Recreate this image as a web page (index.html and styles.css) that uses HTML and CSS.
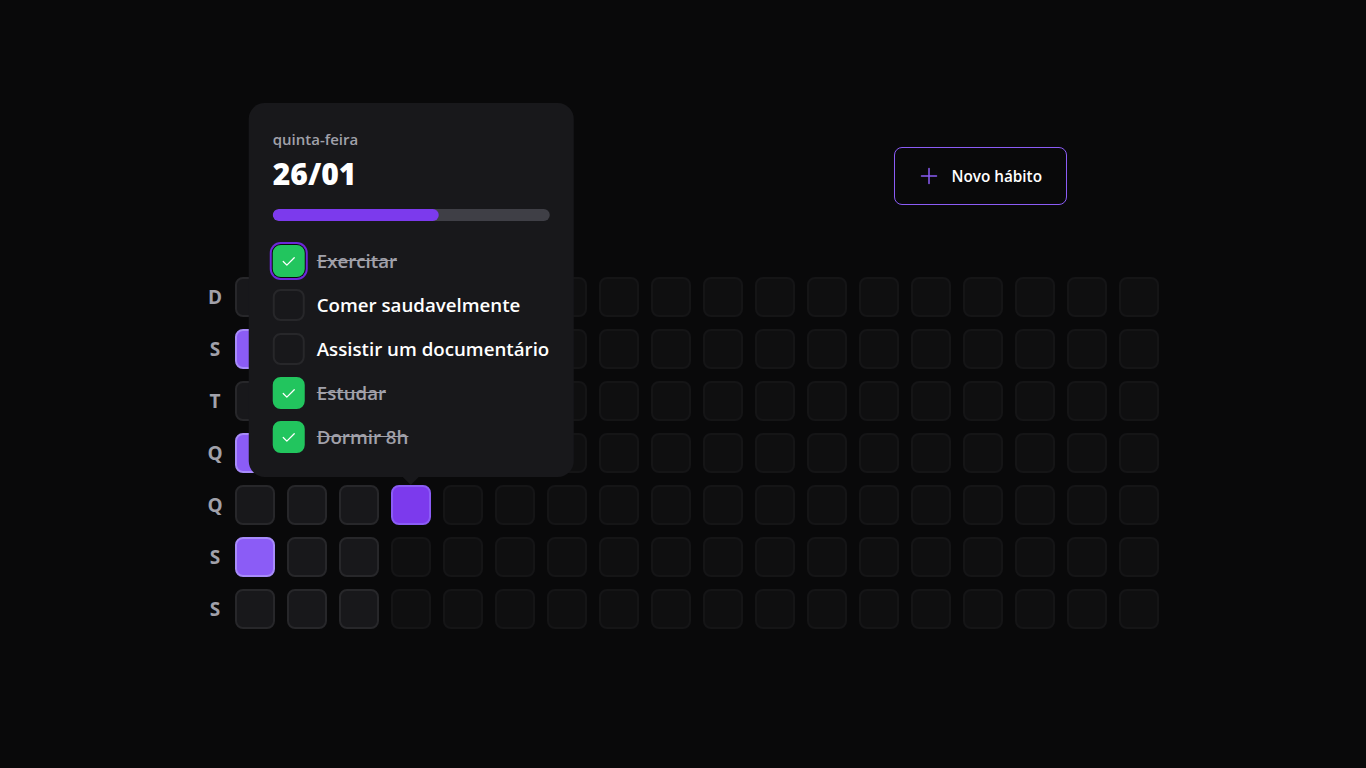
FILE: index.html
```html
<!DOCTYPE html>
<html lang="pt-BR">
<head>
<meta charset="utf-8">
<title>Habits</title>
<link rel="stylesheet" href="styles.css">
</head>
<body>
<div class="screen">
  <div class="content">
    <header class="header">
      <div class="logo-slot"></div>
      <button class="new-habit" type="button">
        <svg width="20" height="20" viewBox="0 0 20 20" fill="none" stroke="#8b5cf6" stroke-width="1.5" stroke-linecap="round"><path d="M2.5 10h15M10 2.5v15"/></svg>
        <span>Novo hábito</span>
      </button>
    </header>

    <div class="table">
      <div class="weekdays">
        <div class="wd">D</div><div class="wd">S</div><div class="wd">T</div><div class="wd">Q</div><div class="wd">Q</div><div class="wd">S</div><div class="wd">S</div>
      </div>
      <div class="summary">
        <!-- col 0 -->
        <div class="sq"></div><div class="sq hi"></div><div class="sq"></div><div class="sq hi"></div><div class="sq"></div><div class="sq hi"></div><div class="sq"></div>
        <!-- col 1 -->
        <div class="sq"></div><div class="sq"></div><div class="sq"></div><div class="sq"></div><div class="sq"></div><div class="sq"></div><div class="sq"></div>
        <!-- col 2 -->
        <div class="sq"></div><div class="sq"></div><div class="sq"></div><div class="sq"></div><div class="sq"></div><div class="sq"></div><div class="sq"></div>
        <!-- col 3 -->
        <div class="sq"></div><div class="sq"></div><div class="sq"></div><div class="sq"></div>
        <div class="sq today">
          <div class="popover">
            <span class="pop-day">quinta-feira</span>
            <span class="pop-date">26/01</span>
            <div class="progress"><div class="progress-fill" style="width:60%"></div></div>
            <ul class="habits">
              <li class="habit done"><span class="box focus"><svg width="20" height="20" viewBox="0 0 20 20" fill="none" stroke="#fff" stroke-width="1.3" stroke-linecap="round" stroke-linejoin="round"><path d="M4.5 10.5l3.6 3.6 7.4-7.4"/></svg></span><span class="label">Exercitar</span></li>
              <li class="habit"><span class="box"></span><span class="label">Comer saudavelmente</span></li>
              <li class="habit"><span class="box"></span><span class="label">Assistir um documentário</span></li>
              <li class="habit done"><span class="box"><svg width="20" height="20" viewBox="0 0 20 20" fill="none" stroke="#fff" stroke-width="1.3" stroke-linecap="round" stroke-linejoin="round"><path d="M4.5 10.5l3.6 3.6 7.4-7.4"/></svg></span><span class="label">Estudar</span></li>
              <li class="habit done"><span class="box"><svg width="20" height="20" viewBox="0 0 20 20" fill="none" stroke="#fff" stroke-width="1.3" stroke-linecap="round" stroke-linejoin="round"><path d="M4.5 10.5l3.6 3.6 7.4-7.4"/></svg></span><span class="label">Dormir 8h</span></li>
            </ul>
            <svg class="arrow" width="16" height="8" viewBox="0 0 16 8"><polygon points="0,0 16,0 8,8" fill="#18181b"/></svg>
          </div>
        </div>
        <div class="sq future"></div><div class="sq future"></div>
        <!-- cols 4-17 -->
        <div class="sq future"></div><div class="sq future"></div><div class="sq future"></div><div class="sq future"></div><div class="sq future"></div><div class="sq future"></div><div class="sq future"></div>
        <div class="sq future"></div><div class="sq future"></div><div class="sq future"></div><div class="sq future"></div><div class="sq future"></div><div class="sq future"></div><div class="sq future"></div>
        <div class="sq future"></div><div class="sq future"></div><div class="sq future"></div><div class="sq future"></div><div class="sq future"></div><div class="sq future"></div><div class="sq future"></div>
        <div class="sq future"></div><div class="sq future"></div><div class="sq future"></div><div class="sq future"></div><div class="sq future"></div><div class="sq future"></div><div class="sq future"></div>
        <div class="sq future"></div><div class="sq future"></div><div class="sq future"></div><div class="sq future"></div><div class="sq future"></div><div class="sq future"></div><div class="sq future"></div>
        <div class="sq future"></div><div class="sq future"></div><div class="sq future"></div><div class="sq future"></div><div class="sq future"></div><div class="sq future"></div><div class="sq future"></div>
        <div class="sq future"></div><div class="sq future"></div><div class="sq future"></div><div class="sq future"></div><div class="sq future"></div><div class="sq future"></div><div class="sq future"></div>
        <div class="sq future"></div><div class="sq future"></div><div class="sq future"></div><div class="sq future"></div><div class="sq future"></div><div class="sq future"></div><div class="sq future"></div>
        <div class="sq future"></div><div class="sq future"></div><div class="sq future"></div><div class="sq future"></div><div class="sq future"></div><div class="sq future"></div><div class="sq future"></div>
        <div class="sq future"></div><div class="sq future"></div><div class="sq future"></div><div class="sq future"></div><div class="sq future"></div><div class="sq future"></div><div class="sq future"></div>
        <div class="sq future"></div><div class="sq future"></div><div class="sq future"></div><div class="sq future"></div><div class="sq future"></div><div class="sq future"></div><div class="sq future"></div>
        <div class="sq future"></div><div class="sq future"></div><div class="sq future"></div><div class="sq future"></div><div class="sq future"></div><div class="sq future"></div><div class="sq future"></div>
        <div class="sq future"></div><div class="sq future"></div><div class="sq future"></div><div class="sq future"></div><div class="sq future"></div><div class="sq future"></div><div class="sq future"></div>
        <div class="sq future"></div><div class="sq future"></div><div class="sq future"></div><div class="sq future"></div><div class="sq future"></div><div class="sq future"></div><div class="sq future"></div>
      </div>
    </div>
  </div>
</div>
</body>
</html>
```

FILE: styles.css
```css
* { box-sizing: border-box; }

html, body {
  margin: 0;
  padding: 0;
  background: #09090a;
  color: #fff;
  font-family: "Open Sans", "Noto Sans", sans-serif;
}

.screen {
  width: 100vw;
  height: 100vh;
  display: flex;
  justify-content: center;
  align-items: center;
}

.content {
  width: 100%;
  max-width: 1024px;
  padding: 0 24px;
  display: flex;
  flex-direction: column;
  gap: 64px;
}

.header {
  width: 100%;
  max-width: 768px;
  margin: 0 auto;
  height: 74px;
  display: flex;
  align-items: center;
  justify-content: space-between;
}

.new-habit {
  display: flex;
  align-items: center;
  gap: 12px;
  padding: 16px 24px;
  border: 1px solid #8b5cf6;
  border-radius: 8px;
  background: transparent;
  color: #fff;
  font-family: inherit;
  font-weight: 600;
  font-size: 15.3px;
  line-height: 24px;
}

.table {
  display: flex;
}

.weekdays {
  display: grid;
  grid-template-rows: repeat(7, 40px);
  row-gap: 12px;
}

.wd {
  width: 40px;
  height: 40px;
  display: flex;
  align-items: center;
  justify-content: center;
  color: #a1a1aa;
  font-weight: 700;
  font-size: 19px;
}

.summary {
  display: grid;
  grid-template-rows: repeat(7, 40px);
  grid-auto-flow: column;
  grid-auto-columns: 40px;
  gap: 12px;
}

.sq {
  width: 40px;
  height: 40px;
  border-radius: 8px;
  background: #18181b;
  border: 2px solid #27272a;
}

.sq.hi {
  background: #8b5cf6;
  border-color: #a78bfa;
}

.sq.today {
  position: relative;
  background: #7c3aed;
  border-color: #8b5cf6;
}

.sq.future {
  opacity: 0.4;
}

.popover {
  position: absolute;
  left: 50%;
  bottom: calc(100% + 10px);
  transform: translateX(-50%);
  min-width: 320px;
  padding: 24px;
  border-radius: 16px;
  background: #18181b;
  display: flex;
  flex-direction: column;
  white-space: nowrap;
  z-index: 5;
}

.pop-day {
  color: #a1a1aa;
  font-weight: 600;
  font-size: 15px;
  line-height: 24px;
}

.pop-date {
  margin-top: 5px;
  font-weight: 800;
  font-size: 30px;
  line-height: 36px;
  color: #fff;
}

.progress {
  margin-top: 17px;
  height: 12px;
  border-radius: 12px;
  background: #3f3f46;
  overflow: hidden;
}

.progress-fill {
  height: 100%;
  border-radius: 12px;
  background: #7c3aed;
}

.habits {
  list-style: none;
  margin: 24px 0 0;
  padding: 0;
  display: flex;
  flex-direction: column;
  gap: 12px;
}

.habit {
  display: flex;
  align-items: center;
  gap: 12px;
  height: 32px;
}

.box {
  width: 32px;
  height: 32px;
  border-radius: 8px;
  background: #18181b;
  border: 2px solid #27272a;
  display: flex;
  align-items: center;
  justify-content: center;
}

.habit.done .box {
  background: #22c55e;
  border-color: #22c55e;
}

.box.focus {
  box-shadow: 0 0 0 1px #09090a, 0 0 0 3px #6d28d9;
}

.label {
  font-weight: 600;
  font-size: 18.7px;
  line-height: 24px;
  color: #fff;
}

.habit.done .label {
  color: #a1a1aa;
  text-decoration: line-through;
}

.arrow {
  position: absolute;
  top: 100%;
  left: 50%;
  margin-left: -8px;
  display: block;
}
```
